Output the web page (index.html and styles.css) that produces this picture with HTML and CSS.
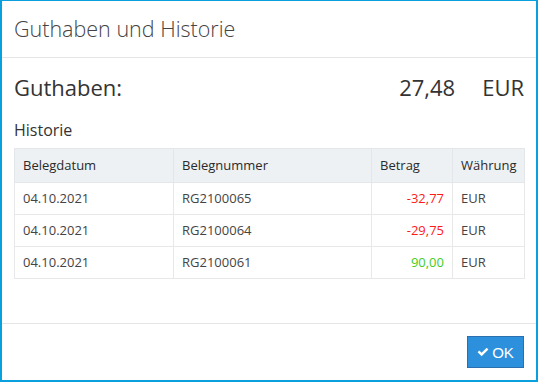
FILE: index.html
```html
<!DOCTYPE html>
<html lang="de">
<head>
<meta charset="utf-8">
<title>Guthaben und Historie</title>
<link rel="stylesheet" href="styles.css">
</head>
<body>
<div class="modal">
  <div class="modal-header">
    <h4 class="modal-title">Guthaben und Historie</h4>
  </div>
  <div class="modal-body">
    <div class="balance">
      <span class="balance-label">Guthaben:</span>
      <span class="balance-value">27,48</span>
      <span class="balance-cur">EUR</span>
    </div>
    <div class="section-title">Historie</div>
    <table class="history">
      <thead>
        <tr>
          <th class="c-date">Belegdatum</th>
          <th class="c-num">Belegnummer</th>
          <th class="c-amt">Betrag</th>
          <th class="c-cur">Währung</th>
        </tr>
      </thead>
      <tbody>
        <tr>
          <td>04.10.2021</td>
          <td>RG2100065</td>
          <td class="amt neg">-32,77</td>
          <td>EUR</td>
        </tr>
        <tr>
          <td>04.10.2021</td>
          <td>RG2100064</td>
          <td class="amt neg">-29,75</td>
          <td>EUR</td>
        </tr>
        <tr>
          <td>04.10.2021</td>
          <td>RG2100061</td>
          <td class="amt pos">90,00</td>
          <td>EUR</td>
        </tr>
      </tbody>
    </table>
  </div>
  <div class="modal-footer">
    <button class="btn-ok" type="button"><svg class="check" viewBox="0 0 12 10" width="12" height="10"><path d="M0.6 5.2 L2.3 3.5 L4.6 5.8 L9.7 0.7 L11.4 2.4 L4.6 9.2 Z" fill="#fff"/></svg>OK</button>
  </div>
</div>
</body>
</html>
```
FILE: styles.css
```css
* { box-sizing: border-box; }
html, body { margin: 0; padding: 0; }
body {
  width: 538px;
  height: 382px;
  font-family: "Open Sans", "Liberation Sans", sans-serif;
  color: #333;
  background: #fff;
}
.modal {
  width: 538px;
  height: 382px;
  border-style: solid;
  border-color: #0aa0de;
  border-width: 1px 2px 2px 2px;
  display: flex;
  flex-direction: column;
}
.modal-header {
  height: 57px;
  flex: none;
  padding: 0 12px;
  border-bottom: 1px solid #e5e5e5;
  display: flex;
  align-items: center;
}
.modal-title {
  margin: 0;
  font-size: 21.5px;
  font-weight: 300;
  color: #444;
  line-height: 1;
  padding-bottom: 1px;
}
.modal-body {
  flex: 1;
  padding: 0 12px;
}
.balance {
  display: flex;
  align-items: center;
  height: 58px;
  font-size: 22px;
  color: #333;
}
.balance-label { flex: 1; }
.balance-value { margin-right: 27px; }
.section-title {
  font-size: 16px;
  line-height: 22px;
  margin-top: 3px;
  margin-bottom: 7px;
  color: #333;
}
.history {
  width: 510px;
  border-collapse: collapse;
  table-layout: fixed;
  font-size: 13px;
  border: 1px solid #ececec;
}
.history th, .history td {
  text-align: left;
  padding: 7px 8px;
  line-height: 17px;
  border: 1px solid #e8e8e8;
}
.history th {
  background: #eef1f4;
  font-weight: 400;
  color: #2a2a2a;
  padding: 8px 8px;
  border-color: #e4e7ea;
}
.history td { color: #444; }
.c-date { width: 159px; }
.c-num { width: 198px; }
.c-amt { width: 81px; }
.c-cur { width: 72px; }
.history td.amt { text-align: right; }
.history td.neg { color: #ff1a1a; }
.history td.pos { color: #44cc22; }
.modal-footer {
  flex: none;
  border-top: 1px solid #e5e5e5;
  height: 57px;
  padding: 12px 12px 0 0;
  display: flex;
  justify-content: flex-end;
  align-items: flex-start;
}
.btn-ok {
  width: 57px;
  height: 32px;
  background: #2c90dd;
  border: 1px solid #2a6fae;
  color: #fff;
  font-family: "Liberation Sans", Arial, sans-serif;
  font-size: 15px;
  display: flex;
  align-items: center;
  justify-content: center;
  gap: 3px;
  padding: 0;
}
.check { display: block; }
```
